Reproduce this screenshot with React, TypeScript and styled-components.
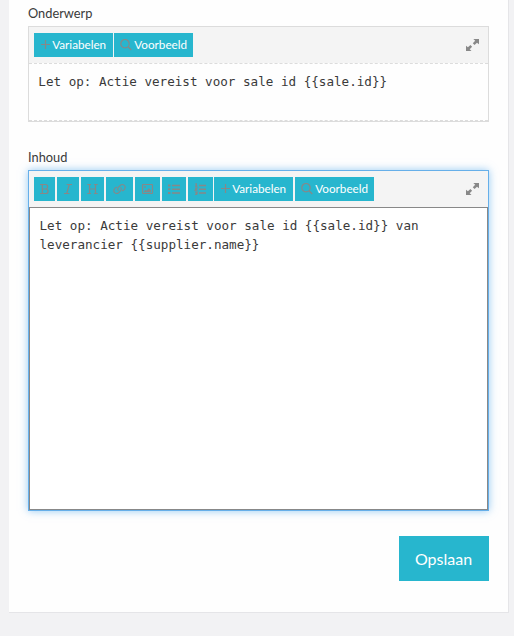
import React from "react";
import styled, { createGlobalStyle } from "styled-components";

const GlobalStyle = createGlobalStyle`
  * { box-sizing: border-box; }
  body { margin: 0; background: #f2f2f4; font-family: Lato, sans-serif; color: #3a3a3a; }
`;

const Page = styled.main`
  height: 636px;
  padding: 0 5px 0 9px;
  overflow: hidden;
`;

const Panel = styled.form`
  display: flex;
  flex-direction: column;
  height: 613px;
  padding: 5px 19px 0;
  background: #fefefe;
  border: solid #e5e5e8;
  border-width: 0 1px 1px 0;
`;

const Label = styled.label`
  height: 21px;
  font-size: 12.8px;
  line-height: 17px;
`;

const Editor = styled.section<{ $focused?: boolean }>`
  display: flex;
  flex-direction: column;
  width: 461px;
  height: ${(p) => (p.$focused ? 341 : 96)}px;
  margin-bottom: ${(p) => (p.$focused ? 25 : 27)}px;
  border: 1px solid ${(p) => (p.$focused ? "#66afe9" : "#dcdcdc")};
  box-shadow: ${(p) => (p.$focused ? "0 0 8px rgba(82, 168, 236, 0.6)" : "none")};
`;

const Toolbar = styled.div`
  display: flex;
  align-items: center;
  height: 36px;
  flex: none;
  padding: 0 9px 0 5px;
  background: #f4f4f4;
`;

const ToolButton = styled.button<{ $w: number; $gap?: number }>`
  display: flex;
  align-items: center;
  justify-content: center;
  flex: none;
  width: ${(p) => p.$w}px;
  height: 24px;
  margin: 0 ${(p) => p.$gap ?? 2}px 0 0;
  padding: 0;
  border: 0;
  background: #27b6ce;
  color: #fff;
  font: 11.7px/18px Lato, sans-serif;
  white-space: nowrap;
`;

const Icon = styled.svg`
  flex: none;
  fill: none;
  stroke: #888;
  stroke-width: 1.2;
  overflow: visible;
`;

const ExpandIcon = styled.svg`
  margin-left: auto;
  fill: #888;
`;

const TextArea = styled.textarea<{ $focused?: boolean }>`
  flex: 1;
  width: 100%;
  margin: 0;
  padding: ${(p) => (p.$focused ? "8px 9.5px" : "8px 9.3px")};
  border: ${(p) => (p.$focused ? "1px solid #888" : "1px dashed #dcdcdc")};
  border-left-width: ${(p) => (p.$focused ? 1 : 0)}px;
  border-right-width: ${(p) => (p.$focused ? 1 : 0)}px;
  outline: 0;
  resize: none;
  background: ${(p) => (p.$focused ? "#fff" : "#fefefe")};
  color: #3a3a3a;
  font: 12.6px/19px "DejaVu Sans Mono", monospace;
`;

const SaveButton = styled.button`
  align-self: flex-end;
  width: 90px;
  height: 45px;
  padding: 0 1px 0 0;
  border: 0;
  background: #27b6ce;
  color: #fff;
  font: 16px Lato, sans-serif;
`;

const Caption = styled.span`
  margin-left: 2.4px;
  padding-bottom: 2px;
`;

const BoldIcon = () => (
  <Icon width="9" height="12" viewBox="0 0 9 12">
    <path d="M0 1.5h5.4a2.2 2.2 0 0 1 0 4.5H2M2.3 1.5v9M0 10.5h5.8a2.2 2.2 0 0 0 0-4.5" />
  </Icon>
);
const ItalicIcon = () => (
  <Icon width="8" height="12" viewBox="0 0 8 12">
    <path d="M2.6 1.5H8M0 10.5h5.4M5.3 1.5l-2.6 9" />
  </Icon>
);
const HeadingIcon = () => (
  <Icon width="11" height="12" viewBox="0 0 11 12">
    <path d="M.3 1.5H4M7 1.5h3.7M.3 10.5H4M7 10.5h3.7M2.5 1.5v9M8.5 1.5v9M2.3 6h6.4" />
  </Icon>
);
const LinkIcon = () => (
  <Icon width="13" height="12" viewBox="0 0 14 12">
    <path d="M8 4.2c1.4 1 1.3 2.6.1 3.9L6 10C3.3 12 0 9.6 1 6.8 1.6 5.3 3 4.2 4.2 3.9M6 7.8C4.6 6.8 4.7 5.2 5.9 3.9L8 2c2.7-2 6 .4 5 3.2-.6 1.5-2 2.6-3.2 2.9" />
  </Icon>
);
const ImageIcon = () => (
  <Icon width="11" height="12" viewBox="0 0 11 12">
    <rect x=".5" y="1.5" width="10" height="9" rx=".8" />
    <circle cx="3" cy="4" r=".9" fill="#888" stroke="none" />
    <path fill="#888" stroke="none" d="M2 9.3V8.2l1.5-1.4 1.1 1 2.4-2.6 2 2.2v1.9z" />
  </Icon>
);
const BulletsIcon = () => (
  <Icon width="12" height="12" viewBox="0 0 12 12">
    <path d="M4 2.5h8M4 6.2h8M4 10h8" strokeWidth="1.4" />
    <path d="M0 2.5h2.4M0 6.2h2.4M0 10h2.4" strokeWidth="1.8" />
  </Icon>
);
const NumbersIcon = () => (
  <Icon width="11" height="12" viewBox="0 0 11 12">
    <path d="M4 2.5h7M4 6.2h7M4 10h7" strokeWidth="1.4" />
    <path d="M.3.8h1v2.4M0 3.3h2.4M0 5h2L.2 7.2h2.2M0 9h2.2L1.1 10l1 .7-1 .8H0" />
  </Icon>
);
const PlusIcon = () => (
  <Icon width="9" height="12" viewBox="0 0 9 12">
    <path d="M0 5.5h9M4.5 1v9" />
  </Icon>
);
const SearchIcon = () => (
  <Icon width="12" height="12" viewBox="0 0 12 12">
    <circle cx="5" cy="4.7" r="4.2" />
    <path d="m8 7.8 3.3 3.2" />
  </Icon>
);
const Expand = () => (
  <ExpandIcon width="13" height="12" viewBox="0 0 13 12">
    <path d="M7.3 0H13v5.2L11 3.7 8.5 6 6.8 4.3 9.2 1.8zM0 6.8l1.9 1.5L4.4 6l1.7 1.7-2.4 2.5L5.5 12H0z" />
  </ExpandIcon>
);

const markup = [
  { w: 21, name: "Vet", Glyph: BoldIcon },
  { w: 22, name: "Cursief", Glyph: ItalicIcon },
  { w: 23, name: "Kop", Glyph: HeadingIcon },
  { w: 27, name: "Link", Glyph: LinkIcon },
  { w: 25, name: "Afbeelding", Glyph: ImageIcon },
  { w: 24, name: "Lijst", Glyph: BulletsIcon },
  { w: 25, name: "Genummerde lijst", Glyph: NumbersIcon, gap: 1 },
];

function TextTools({ gap }: { gap: number }) {
  return (
    <>
      <ToolButton type="button" $w={79} $gap={gap}>
        <PlusIcon />
        <Caption>Variabelen</Caption>
      </ToolButton>
      <ToolButton type="button" $w={79}>
        <SearchIcon />
        <Caption>Voorbeeld</Caption>
      </ToolButton>
    </>
  );
}

export default function App() {
  return (
    <Page>
      <GlobalStyle />
      <Panel>
        <Label htmlFor="subject">Onderwerp</Label>
        <Editor>
          <Toolbar>
            <TextTools gap={1} />
            <Expand />
          </Toolbar>
          <TextArea id="subject" spellCheck={false} defaultValue="Let op: Actie vereist voor sale id {{sale.id}}" />
        </Editor>
        <Label htmlFor="content">Inhoud</Label>
        <Editor $focused>
          <Toolbar>
            {markup.map(({ w, name, Glyph, gap }) => (
              <ToolButton key={name} type="button" aria-label={name} $w={w} $gap={gap}>
                <Glyph />
              </ToolButton>
            ))}
            <TextTools gap={2} />
            <Expand />
          </Toolbar>
          <TextArea
            id="content"
            $focused
            spellCheck={false}
            defaultValue="Let op: Actie vereist voor sale id {{sale.id}} van leverancier {{supplier.name}}"
          />
        </Editor>
        <SaveButton type="button">Opslaan</SaveButton>
      </Panel>
    </Page>
  );
}
